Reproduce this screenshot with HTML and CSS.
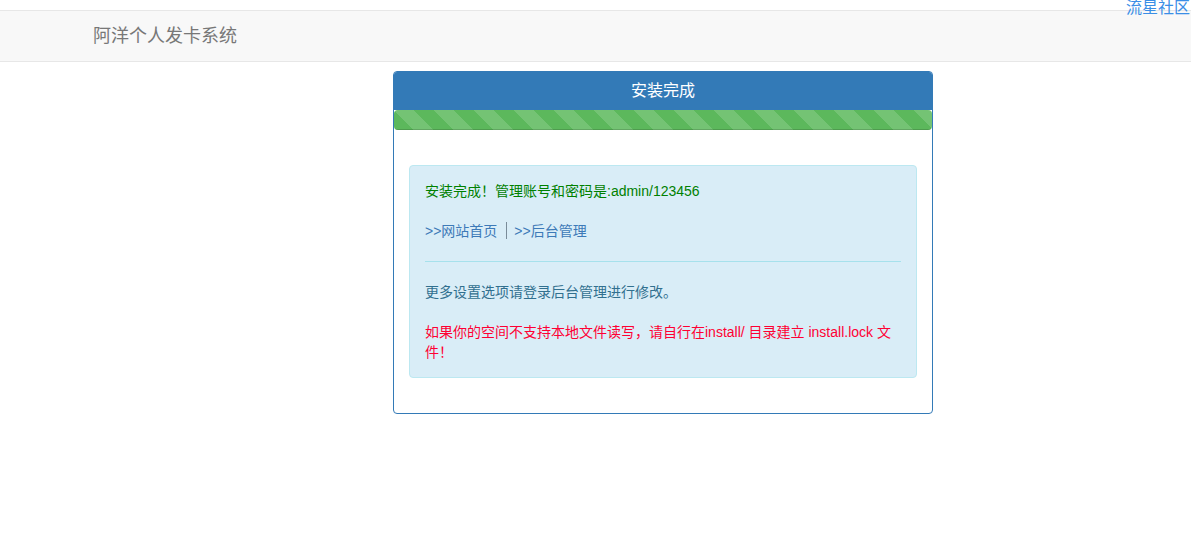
FILE: index.html
```html
<!DOCTYPE html>
<html lang="zh-CN">
<head>
  <meta charset="UTF-8" />
  <meta name="viewport" content="width=device-width, initial-scale=1" />
  <title>安装完成 - 阿洋个人发卡系统</title>
  <link rel="stylesheet" href="styles.css">
</head>
<body>
  <!-- top-right community link -->
  <a class="community" href="#">流星社区</a>

  <nav class="navbar">
    <span class="navbar-brand">阿洋个人发卡系统</span>
  </nav>

  <div class="main">
    <div class="panel">
      <div class="panel-heading">
        <h3 class="panel-title">安装完成</h3>
      </div>
      <div class="progress">
        <div class="progress-bar"></div>
      </div>
      <div class="panel-body">
        <div class="alert">
          <p class="done">安装完成！管理账号和密码是:admin/123456</p>
          <p class="links"><a href="#">&gt;&gt;网站首页</a><span class="sep"></span><a href="#">&gt;&gt;后台管理</a></p>
          <hr>
          <p>更多设置选项请登录后台管理进行修改。</p>
          <p class="warn">如果你的空间不支持本地文件读写，请自行在install/ 目录建立 install.lock 文件！</p>
        </div>
      </div>
    </div>
  </div>
</body>
</html>
```

FILE: styles.css
```css
/* Basic page styling */
body {
  margin: 0;
  padding: 0;
  background: #fff;
  font-family: "Liberation Sans", Arial, "Noto Sans CJK SC", sans-serif;
  font-size: 14px;
  line-height: 20px;
  color: #333;
  position: relative;
}
a {
  text-decoration: none;
}
/* Link stuck in the top right corner */
.community {
  position: absolute;
  top: -2px;
  right: 1px;
  font-size: 16px;
  line-height: 20px;
  color: #3a8ee6;
  z-index: 5;
}
/* Navbar */
.navbar {
  margin-top: 10px;
  height: 50px;
  background: #f8f8f8;
  border-top: 1px solid #e7e7e7;
  border-bottom: 1px solid #e7e7e7;
  display: flex;
  align-items: center;
  padding-left: 93px;
}
.navbar-brand {
  font-size: 18px;
  color: #777;
  line-height: 20px;
}
/* Install result panel */
.main {
  width: 540px;
  margin: 9px 0 0 393px;
}
.panel {
  border: 1px solid #337ab7;
  border-radius: 4px;
  background: #fff;
}
.panel-heading {
  background: #337ab7;
  color: #fff;
  padding: 10px 15px;
  border-radius: 3px 3px 0 0;
  text-align: center;
}
.panel-title {
  margin: 0;
  font-size: 16px;
  font-weight: normal;
  line-height: 17.6px;
}
/* Striped progress bar */
.progress {
  height: 20px;
  background: #f5f5f5;
  border-radius: 4px;
  overflow: hidden;
  margin-bottom: 20px;
}
.progress-bar {
  width: 100%;
  height: 100%;
  background-color: #5cb85c;
  background-image: linear-gradient(45deg, rgba(255,255,255,.15) 25%, transparent 25%, transparent 50%, rgba(255,255,255,.15) 50%, rgba(255,255,255,.15) 75%, transparent 75%, transparent);
  background-size: 40px 40px;
  box-shadow: inset 0 -1px 0 rgba(0,0,0,.15);
}
.panel-body {
  padding: 15px;
}
/* Info alert */
.alert {
  background: #d9edf7;
  border: 1px solid #bce8f1;
  border-radius: 4px;
  color: #31708f;
  padding: 15px;
  margin-bottom: 20px;
}
.alert p {
  margin: 0 0 20px;
}
.alert p:last-child {
  margin-bottom: 0;
}
.alert .done {
  color: #008000;
}
.alert .links {
  display: flex;
  align-items: center;
}
.alert .links a {
  color: #3d7ab8;
}
.alert .sep {
  display: inline-block;
  width: 0;
  height: 17px;
  border-left: 1px solid #7a8c99;
  margin: 0 7px 0 9px;
}
.alert hr {
  border: 0;
  border-top: 1px solid #a6e1ec;
  margin: 20px 0;
}
.alert .warn {
  color: #ff0033;
}
```
